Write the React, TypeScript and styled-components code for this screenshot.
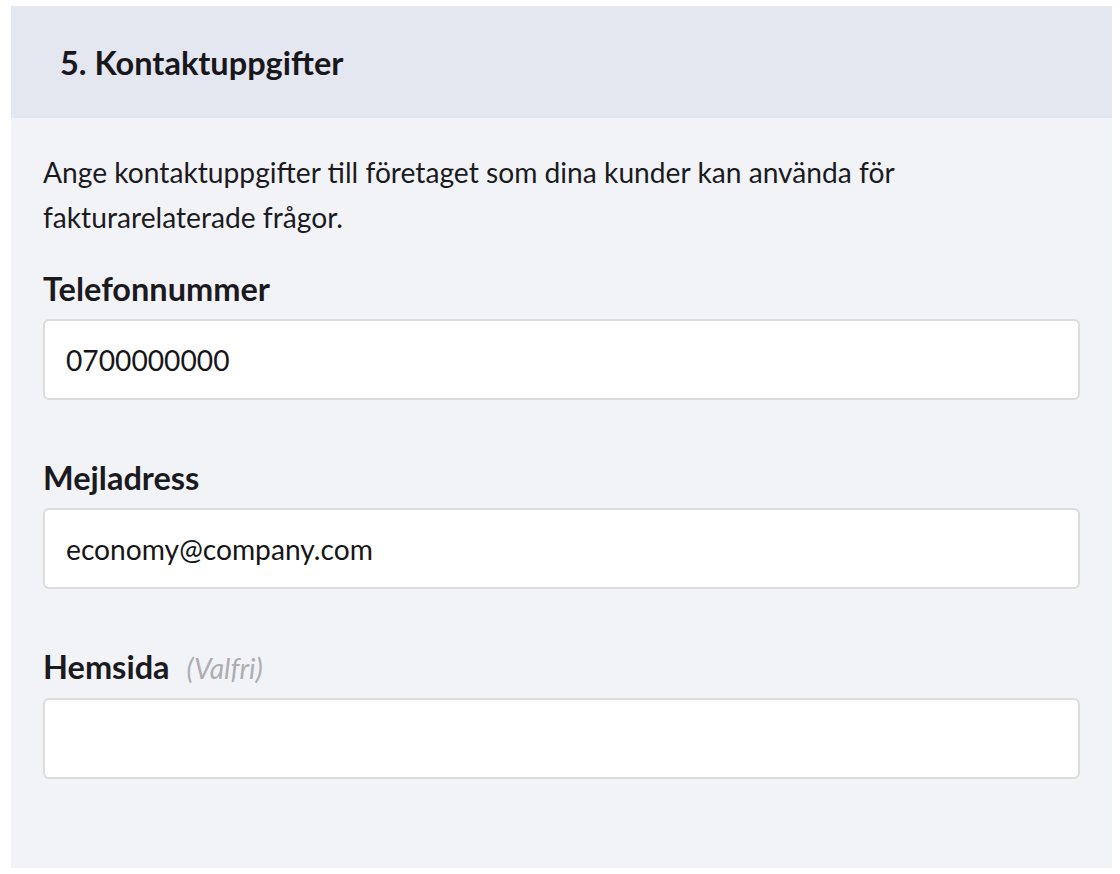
import styled, { createGlobalStyle } from "styled-components";

const GlobalStyle = createGlobalStyle`
  html, body {
    margin: 0;
    padding: 0;
    background: #ffffff;
  }
  body {
    font-family: Lato, "Noto Sans", sans-serif;
    color: #1b1b1f;
  }
  * {
    box-sizing: border-box;
  }
`;

const Page = styled.div`
  padding: 6px 8px 6px 11px;
`;

const Card = styled.section`
  background: #f2f3f7;
`;

const CardHeader = styled.header`
  height: 112px;
  display: flex;
  align-items: center;
  padding: 0 49px;
  background: #e4e7f0;
`;

const Title = styled.h2`
  margin: 0;
  font-size: 32.5px;
  font-weight: 700;
  line-height: 1.2;
  color: #18181c;
`;

const CardBody = styled.div`
  padding: 32px 32px 31px;
`;

const Intro = styled.p`
  margin: 0 0 29px;
  font-size: 28.2px;
  line-height: 45px;
  max-width: 900px;
`;

const Field = styled.div`
  display: flex;
  flex-direction: column;
  gap: 10px;
  margin-bottom: 58px;
`;

const Label = styled.label`
  display: flex;
  align-items: baseline;
  gap: 17px;
  font-size: 32.5px;
  font-weight: 700;
  line-height: 40px;
`;

const Optional = styled.span`
  font-size: 28.2px;
  font-style: italic;
  font-weight: 400;
  color: #adadb2;
`;

const Input = styled.input`
  width: 100%;
  height: 81px;
  padding: 0 21px;
  border: 2px solid #dcdcde;
  border-radius: 6px;
  background: #ffffff;
  font-family: Lato, "Noto Sans", sans-serif;
  font-size: 28.2px;
  color: #16161a;
  outline: none;
`;

const fields = [
  { id: "phone", label: "Telefonnummer", value: "0700000000" },
  { id: "email", label: "Mejladress", value: "economy@company.com" },
  { id: "web", label: "Hemsida", value: "", optional: true },
];

export default function App() {
  return (
    <>
      <GlobalStyle />
      <Page>
        <Card>
          <CardHeader>
            <Title>5. Kontaktuppgifter</Title>
          </CardHeader>
          <CardBody>
            <Intro>
              Ange kontaktuppgifter till företaget som dina kunder kan använda för
              fakturarelaterade frågor.
            </Intro>
            {fields.map((f) => (
              <Field key={f.id}>
                <Label htmlFor={f.id}>
                  {f.label}
                  {f.optional && <Optional>(Valfri)</Optional>}
                </Label>
                <Input id={f.id} defaultValue={f.value} />
              </Field>
            ))}
          </CardBody>
        </Card>
      </Page>
    </>
  );
}
